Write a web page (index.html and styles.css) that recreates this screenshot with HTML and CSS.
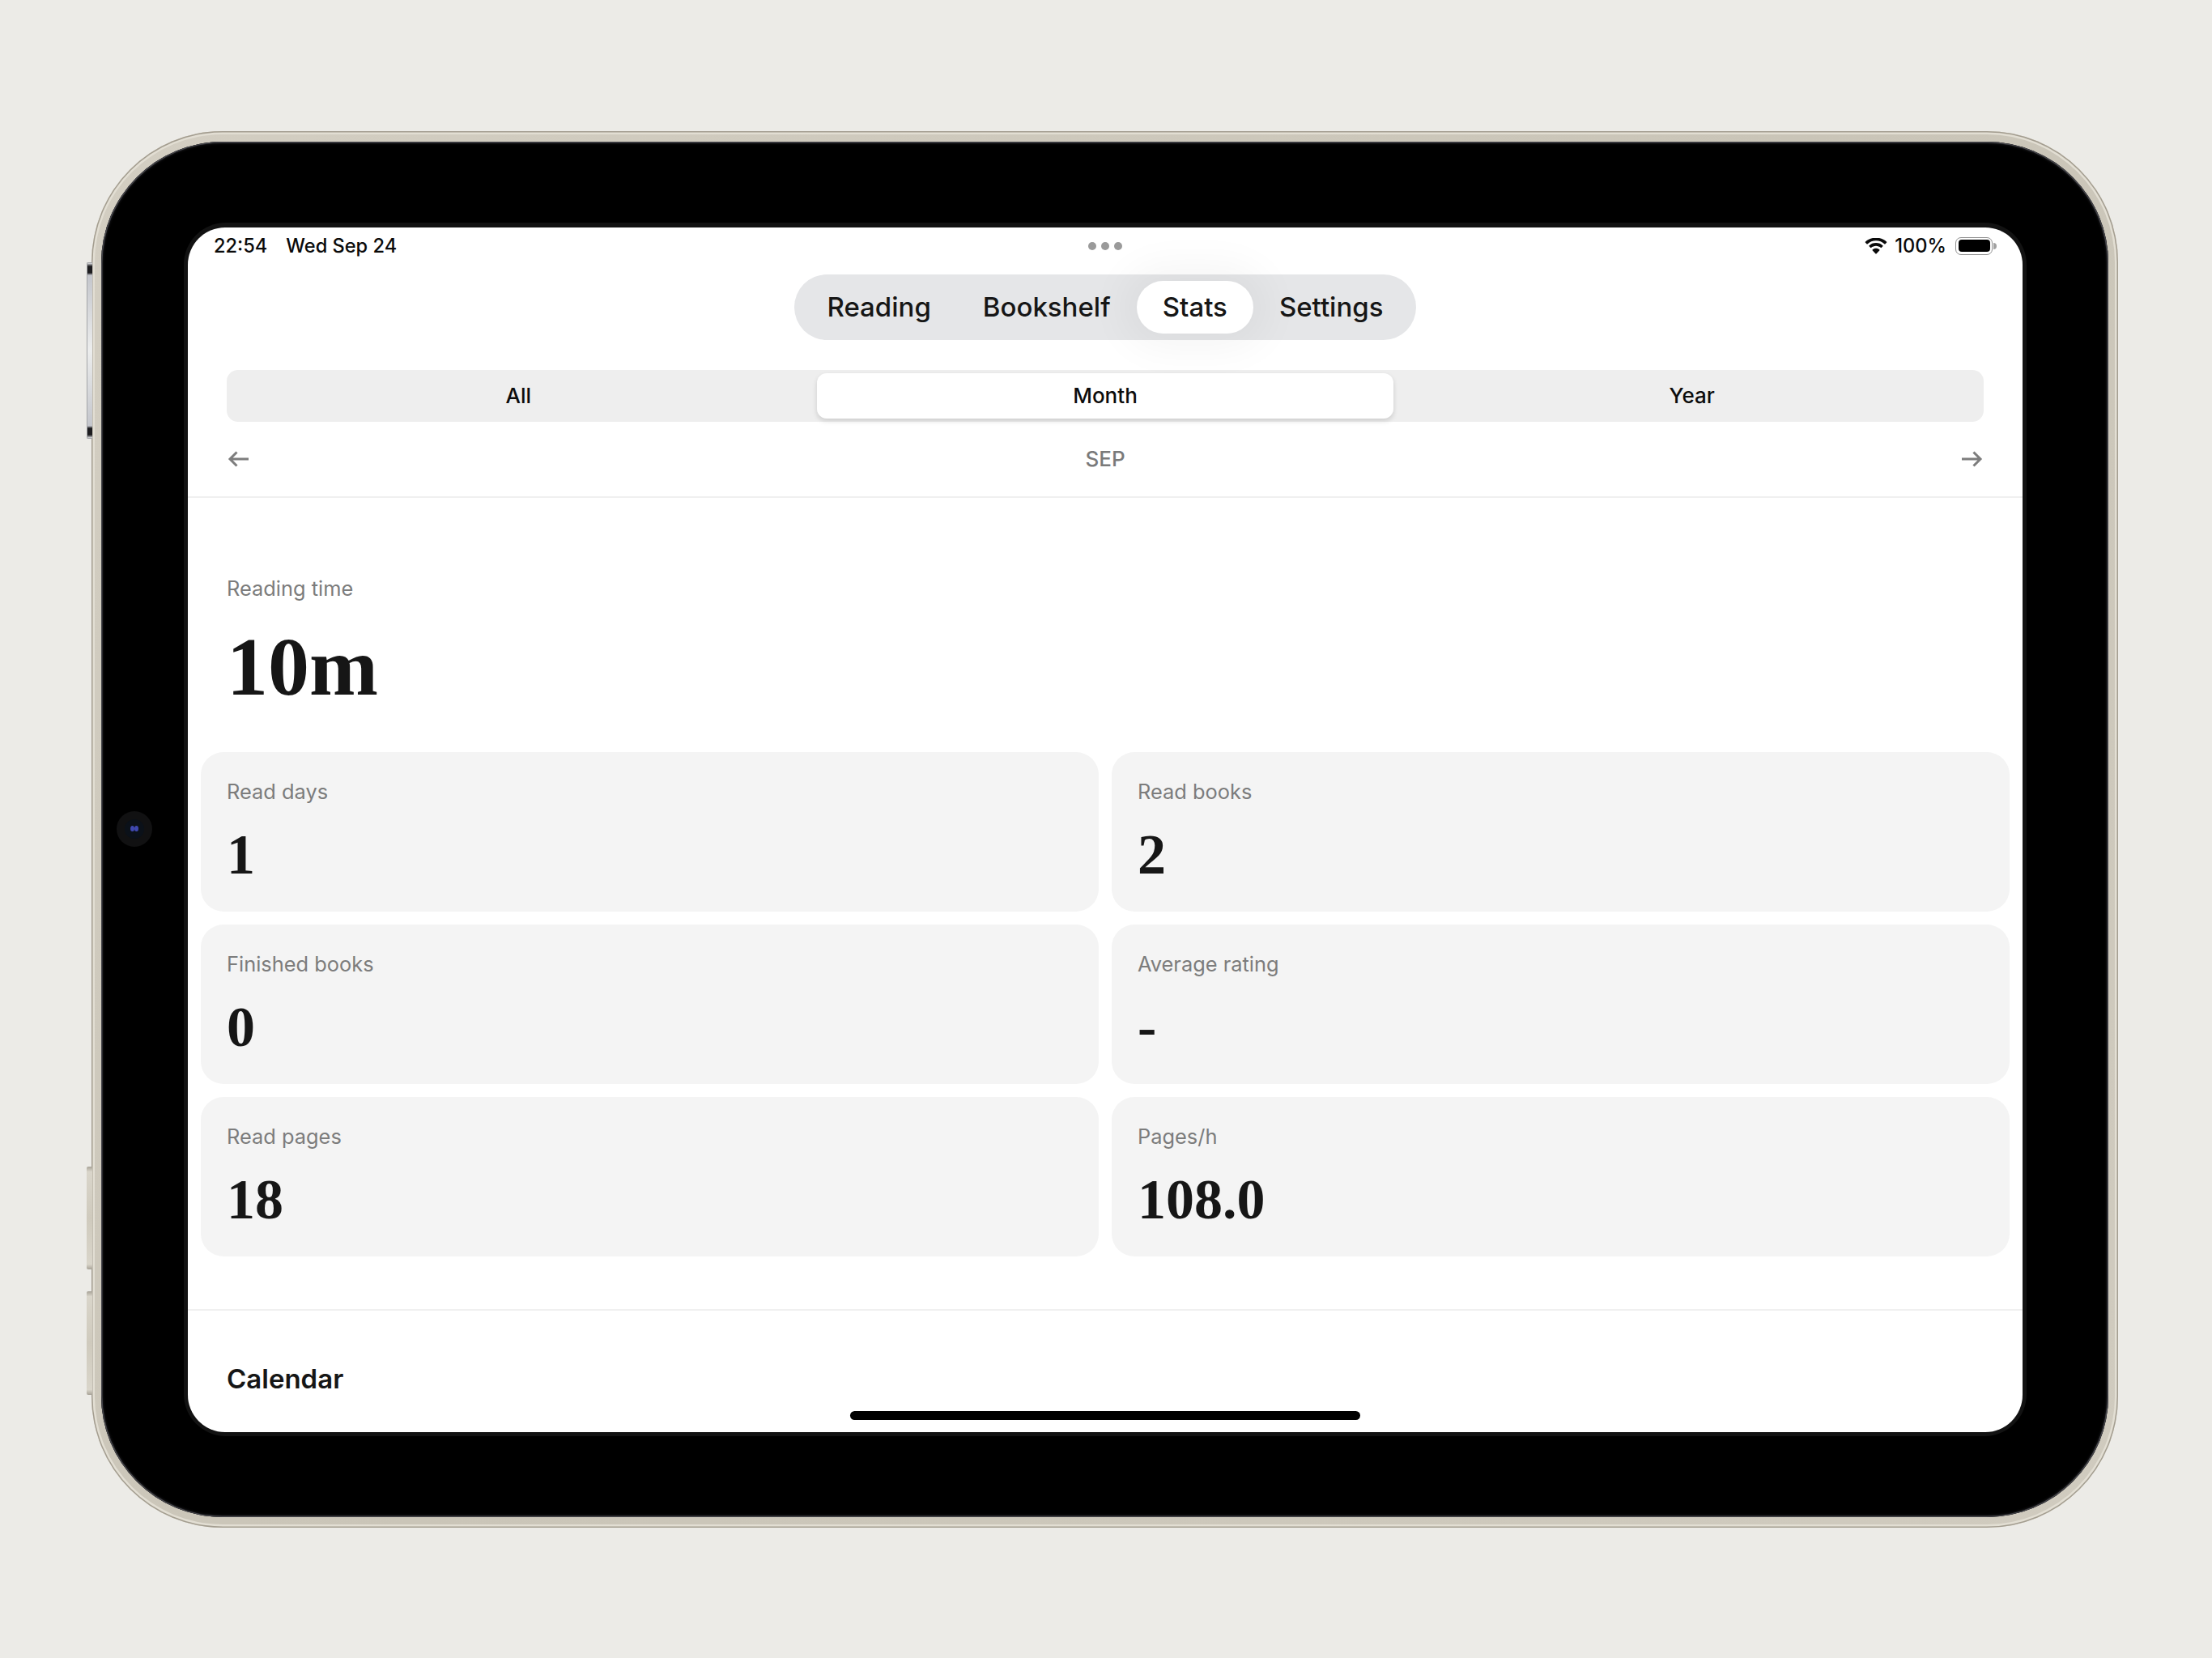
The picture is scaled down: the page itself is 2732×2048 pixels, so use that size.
FILE: index.html
```html
<!DOCTYPE html>
<html lang="en">
<head>
<meta charset="utf-8">
<title>Stats</title>
<link rel="stylesheet" href="styles.css">
</head>
<body>
<div class="device">
  <span class="hw hw-power"></span>
  <span class="hw hw-vol-up"></span>
  <span class="hw hw-vol-down"></span>
  <div class="frame">
    <div class="camera"><span class="camera-lens"><i></i><i></i></span></div>
    <div class="screen-edge">
      <main class="screen">
        <header class="status">
          <div class="status-left"><span>22:54</span><span>Wed Sep 24</span></div>
          <div class="dots"><i></i><i></i><i></i></div>
          <div class="status-right">
            <svg class="wifi" viewBox="0 0 28 20" aria-hidden="true"><path d="M14 3.200c4.100 0 7.800 1.600 10.600 4.200.2.200.5.200.7 0l1.900-2c.2-.2.200-.5 0-.7C23.700 1.400 19.100-.4 14-.4S4.300 1.400.8 4.700c-.2.200-.2.500 0 .7l1.900 2c.2.200.5.200.7 0C6.200 4.800 9.900 3.200 14 3.200z"/><path d="M14 9.800c2.300 0 4.400.9 6 2.300.2.200.5.200.7 0l1.900-2c.2-.2.200-.5 0-.7C20.300 7.300 17.300 6.100 14 6.100s-6.300 1.200-8.600 3.300c-.2.200-.2.500 0 .7l1.900 2c.2.200.5.200.7 0 1.600-1.400 3.700-2.300 6-2.300z"/><path d="M14 12.800c-1.700 0-3.200.6-4.400 1.700-.2.200-.2.500 0 .7l4 4.300c.2.200.6.200.8 0l4-4.300c.2-.2.200-.5 0-.7-1.200-1.100-2.700-1.700-4.400-1.700z"/></svg>
            <span>100%</span>
            <span class="battery"><span class="battery-fill"></span></span>
            <span class="battery-nub"></span>
          </div>
        </header>

        <nav class="tabs">
          <a class="tab">Reading</a>
          <a class="tab">Bookshelf</a>
          <a class="tab tab-active">Stats</a>
          <a class="tab">Settings</a>
        </nav>

        <div class="segment">
          <button class="seg">All</button>
          <button class="seg seg-active">Month</button>
          <button class="seg">Year</button>
        </div>

        <div class="period">
          <svg class="arrow" viewBox="0 0 28 24" aria-hidden="true"><path d="M27 12H4M12.500 3.500L4 12l8.500 8.500"/></svg>
          <span class="period-name">SEP</span>
          <svg class="arrow" viewBox="0 0 28 24" aria-hidden="true"><path d="M1 12h23M15.500 3.500L24 12l-8.500 8.500"/></svg>
        </div>

        <section class="hero">
          <div class="label">Reading time</div>
          <div class="hero-value">10m</div>
        </section>

        <section class="cards">
          <article class="card"><div class="label">Read days</div><div class="card-value">1</div></article>
          <article class="card"><div class="label">Read books</div><div class="card-value">2</div></article>
          <article class="card"><div class="label">Finished books</div><div class="card-value">0</div></article>
          <article class="card"><div class="label">Average rating</div><div class="card-value">-</div></article>
          <article class="card"><div class="label">Read pages</div><div class="card-value">18</div></article>
          <article class="card"><div class="label">Pages/h</div><div class="card-value">108.0</div></article>
        </section>

        <section class="calendar">
          <h2 class="calendar-title">Calendar</h2>
        </section>

        <div class="home-indicator"></div>
      </main>
    </div>
  </div>
</div>
</body>
</html>
```
FILE: styles.css
```css
* { box-sizing: border-box; }
html, body { margin: 0; height: 100%; }
body {
  width: 2732px;
  height: 2048px;
  padding-right: 3px;
  background: #ecebe7;
  display: flex;
  align-items: center;
  justify-content: center;
  font-family: Inter, "Liberation Sans", sans-serif;
  overflow: hidden;
}

.device {
  position: relative;
  width: 2503px;
  height: 1725px;
  border-radius: 162px;
  padding: 13px 12px;
  background: linear-gradient(135deg, #d3cec2, #cac5b8 50%, #d0cbbf);
  box-shadow: inset 0 0 0 1.5px #a39d90, inset 0 0 0 4px #e2ded3;
}
.hw {
  position: absolute;
  left: -6px;
  width: 7px;
  border-radius: 2px 0 0 2px;
  background: linear-gradient(180deg, #a8a398 0, #d9d5ca 5%, #cfcabd 50%, #d9d5ca 95%, #a8a398 100%);
}
.hw-power {
  top: 162px;
  height: 218px;
  background: linear-gradient(180deg, #e0e1e4 0, #1c1c1f 4px, #1c1c1f 12px, #c4c6cc 15px, #eceded 50%, #c4c6cc calc(100% - 15px), #1c1c1f calc(100% - 12px), #1c1c1f calc(100% - 4px), #e0e1e4 100%);
  border: 1.5px solid #a4a5a8;
  border-right: 0;
}
.hw-vol-up { top: 1279px; height: 127px; }
.hw-vol-down { top: 1433px; height: 128px; }

.frame {
  position: relative;
  height: 100%;
  padding: 100px 101px 100px 102px;
  background: #000;
  border-radius: 150px;
  box-shadow: inset 0 0 0 1.5px #45454a, inset 0 0 3px 2px #1d1d20;
}
.camera {
  position: absolute;
  left: 19px;
  top: 827px;
  width: 44px;
  height: 44px;
  border-radius: 50%;
  background: #111112;
  display: flex;
  align-items: center;
  justify-content: center;
}
.camera-lens {
  width: 24px;
  height: 24px;
  border-radius: 50%;
  background: #0b1119;
  display: flex;
  align-items: center;
  justify-content: center;
}
.camera-lens i {
  width: 5px;
  height: 7px;
  border-radius: 50%;
  background: #3f48b0;
}
.screen-edge {
  height: 100%;
  padding: 6px 5px 5px 5px;
  background: #121212;
  border-radius: 52px;
}
.screen {
  position: relative;
  height: 100%;
  overflow: hidden;
  background: #fff;
  border-radius: 46px;
  color: #161616;
}

.status {
  height: 46px;
  margin-bottom: 12px;
  padding: 0 32px;
  display: flex;
  align-items: center;
  justify-content: space-between;
  font-size: 23.600px;
  font-weight: 500;
  line-height: 46px;
  color: #0a0a0a;
}
.status-left { display: flex; gap: 23px; flex: 1; }
.dots { display: flex; gap: 6px; }
.dots i { width: 10px; height: 10px; border-radius: 50%; background: #9a9a9a; }
.status-right { display: flex; align-items: center; flex: 1; justify-content: flex-end; }
.wifi { width: 28px; height: 20px; fill: #0a0a0a; margin-right: 9px; }
.battery {
  width: 46px;
  height: 22px;
  margin-left: 11px;
  padding: 2.5px;
  border: 1.5px solid #8f8f8f;
  border-radius: 7px;
  display: flex;
}
.battery-fill { flex: 1; background: #000; border-radius: 4px; }
.battery-nub { width: 4px; height: 8px; margin-left: 1px; background: #a0a0a0; border-radius: 0 4px 4px 0; }

.tabs {
  width: fit-content;
  height: 81px;
  margin: 0 auto;
  padding: 8px;
  display: flex;
  align-items: center;
  background: #e5e6e8;
  border-radius: 41px;
}
.tab {
  height: 65px;
  padding: 0 32px;
  display: flex;
  align-items: center;
  font-size: 33px;
  font-weight: 500;
  color: #161616;
  border-radius: 33px;
}
.tab-active {
  background: #fff;
  box-shadow: 0 0 50px 18px rgba(0, 0, 0, 0.045);
}

.segment {
  margin: 37px 48px 0;
  height: 64px;
  padding: 4px;
  display: grid;
  grid-template-columns: repeat(3, 1fr);
  gap: 12px;
  background: #eeeeee;
  border-radius: 14px;
}
.seg {
  border: 0;
  background: none;
  padding: 0;
  font: inherit;
  font-size: 26px;
  font-weight: 500;
  color: #0c0c0c;
  border-radius: 12px;
}
.seg-active {
  background: #fff;
  box-shadow: 0 3px 6px rgba(0, 0, 0, 0.14);
}

.period {
  height: 94px;
  padding: 0 48px;
  display: flex;
  align-items: center;
  justify-content: space-between;
  border-bottom: 2px solid #f0f0f0;
}
.arrow {
  width: 28px;
  height: 24px;
  fill: none;
  stroke: #7d7d7d;
  stroke-width: 3;
}
.period-name { font-size: 26px; font-weight: 500; color: #7a7a7a; }

.label {
  font-size: 25.400px;
  line-height: 40px;
  color: #7c7c7c;
}
.hero { padding: 92px 48px 0; height: 314px; }
.hero-value {
  margin-top: 22px;
  font-family: "Liberation Serif", serif;
  font-weight: 700;
  font-size: 102px;
  line-height: 110px;
  color: #161616;
}

.cards {
  padding: 0 16px;
  display: grid;
  grid-template-columns: 1fr 1fr;
  gap: 16px;
}
.card {
  height: 197px;
  padding: 29px 32px 0;
  background: #f4f4f4;
  border-radius: 28px;
}
.card-value {
  margin-top: 18px;
  font-family: "Liberation Serif", serif;
  font-weight: 700;
  font-size: 70px;
  line-height: 80px;
  color: #161616;
}

.calendar {
  margin-top: 65px;
  padding: 62px 48px 0;
  border-top: 2px solid #f0f0f0;
}
.calendar-title {
  margin: 0;
  font-size: 33px;
  line-height: 44px;
  font-weight: 600;
  color: #161616;
}

.home-indicator {
  position: absolute;
  left: 818px;
  bottom: 15px;
  width: 630px;
  height: 11px;
  border-radius: 6px;
  background: #000;
}
```
